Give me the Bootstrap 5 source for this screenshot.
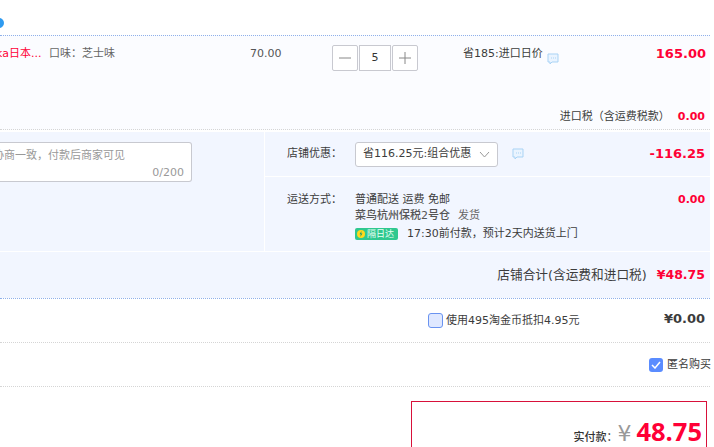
<!DOCTYPE html>
<html lang="zh-CN">
<head>
    <meta charset="UTF-8">
    <meta name="viewport" content="width=device-width, initial-scale=1">
    <title>确认订单</title>
    <link href="https://cdn.jsdelivr.net/npm/bootstrap@5.3.0/dist/css/bootstrap.min.css" rel="stylesheet">
    <script src="https://cdn.jsdelivr.net/npm/bootstrap@5.3.0/dist/js/bootstrap.bundle.min.js"></script>
    <style>
        html, body { height: 447px; overflow: hidden; background: #fff; }
        body { font-family: "DejaVu Sans", "Noto Sans CJK SC", sans-serif; font-size: 11px; color: #3c3c3c; line-height: 16px; }
        .order-wrap { width: 710px; }
        .top-strip { height: 35px; padding-top: 18px; }
        .shop-dot { width: 10px; height: 10px; margin-left: -6px; border-radius: 50%; background: #2f9bf0; }
        .item-row { height: 95px; background: #fbfcff; border-top: 1px dotted #8fb0ea; border-bottom: 1px dotted #d5d5d5; }
        .item-title { width: 53px; flex-shrink: 0; margin-left: -4px; padding-top: 10px; color: #ff0036; white-space: nowrap; }
        .item-sku { width: 201px; flex-shrink: 0; padding-top: 10px; color: #666; }
        .item-price { width: 82px; flex-shrink: 0; padding-top: 10px; color: #555; }
        .qty-btn { width: 26px; height: 26px; border: 1px solid #c8c9d0; border-radius: 2px; background: #fff; }
        .qty-input { width: 32px; height: 26px; border: 1px solid #c8c9d0; background: #fff; color: #333; font-size: 11px; line-height: 24px; text-align: center; }
        .qty-box { gap: 1px; padding-top: 9px; width: 131px; flex-shrink: 0; }
        .promo-text { padding-top: 10px; color: #3c3c3c; }
        .bubble { width: 12px; height: 12px; flex-shrink: 0; }
        .bubble-item { margin-top: 7px; }
        .amount { color: #ff0036; font-weight: 700; font-size: 13px; }
        .amount-sm { font-size: 11px; }
        .item-main { height: 73px; }
        .tax-row { padding-right: 5px; gap: 8px; }
        .band { background: #f2f6ff; }
        .memo-band { margin-top: 2px; }
        .memo-col { width: 264px; flex-shrink: 0; border-right: 1px solid #fff; box-sizing: content-box; padding-top: 10px; }
        .memo-box { width: 192px; height: 40px; background: #fff; border: 1px solid #c8c9d0; border-left: 0; border-radius: 0 3px 3px 0; color: #999; padding: 5px 7px 0 0; }
        .memo-hint { margin-left: -7px; white-space: nowrap; }
        .memo-count { color: #999; text-align: right; padding-top: 1px; }
        .opt-row { height: 45px; border-bottom: 1px solid #fff; padding: 0 5px 0 22px; }
        .opt-label { width: 68px; flex-shrink: 0; }
        .opt-select { width: 143px; height: 25px; background: #fff; border: 1px solid #c8c9d0; border-radius: 3px; padding: 0 7px; color: #3c3c3c; margin-right: 14px; }
        .ship-row { height: 74px; padding: 15px 5px 0 22px; }
        .ship-lines { width: 323px; }
        .ship-line { height: 16px; line-height: 16px; white-space: nowrap; }
        .ship-line-fast { margin-top: 2px; }
        .ship-wh { font-weight: 500; color: #555; }
        .ship-muted { color: #666; }
        .fast-tag { width: 43px; height: 12px; background: #2fc88f; border-radius: 2px; color: #e8fff5; font-size: 9px; line-height: 12px; gap: 2px; padding-left: 2px; margin-right: 9px; }
        .fast-icon { width: 8px; height: 8px; border-radius: 50%; background: #ffd91c; }
        .total-row { height: 47px; border-top: 1px solid #fff; padding-right: 5px; gap: 10px; font-size: 12.7px; }
        .total-row .amount { font-size: 12.5px; }
        .coin-row { height: 45px; border-top: 1px dotted #8fb0ea; border-bottom: 1px dotted #d5d5d5; padding: 14px 5px 0 428px; }
        .coin-check { width: 15px; height: 15px; background: #dfe8ff; border: 1px solid #6a93f0; border-radius: 3px; margin-right: 3px; }
        .coin-total { font-size: 13px; font-weight: 700; color: #3c3c3c; margin-top: -2px; }
        .anon-row { height: 44px; border-bottom: 1px dotted #d5d5d5; }
        .anon-check { width: 14px; height: 14px; background: #5a8cff; border-radius: 3px; margin-right: 4px; }
        .anon-text { margin-right: -1px; }
        .pay-box { width: 296px; height: 46px; margin: 14px 0 0 411px; border: 1px solid #d8113a; border-bottom: 0; padding: 17px 4px 0 0; background: #fff; }
        .pay-label { font-weight: 500; color: #333; }
        .pay-yen { font-size: 22px; color: #999; line-height: 24px; margin-right: 5px; }
        .pay-num { font-size: 25.5px; font-weight: 700; color: #ff0036; line-height: 24px; font-family: "Open Sans", "DejaVu Sans", sans-serif; }
    </style>
</head>
<body>
    <div class="order-wrap">
        <div class="top-strip"><div class="shop-dot"></div></div>

        <!-- item -->
        <div class="item-row">
            <div class="item-main d-flex">
                <div class="item-title">ka日本...</div>
                <div class="item-sku">口味：芝士味</div>
                <div class="item-price">70.00</div>
                <div class="qty-box d-flex align-items-start">
                    <div class="qty-btn d-flex align-items-center justify-content-center">
                        <svg width="12" height="12" viewBox="0 0 12 12"><path d="M0 6h12" stroke="#888" stroke-width="1"/></svg>
                    </div>
                    <div class="qty-input">5</div>
                    <div class="qty-btn d-flex align-items-center justify-content-center">
                        <svg width="12" height="12" viewBox="0 0 12 12"><path d="M0 6h12M6 0v12" stroke="#888" stroke-width="1"/></svg>
                    </div>
                </div>
                <div class="promo-text d-flex flex-grow-1">
                    <span>省185:进口日价</span>
                    <svg class="bubble bubble-item ms-1" viewBox="0 0 12 12"><path d="M1 1h10v8H5L3 11V9H1z" fill="#eaf4ff" stroke="#a9d3f5"/><path d="M4 5h1M6 5h1M8 5h1" stroke="#a9d3f5"/></svg>
                    <span class="amount ms-auto pe-1">165.00</span>
                </div>
            </div>
            <div class="tax-row d-flex justify-content-end">
                <span>进口税（含运费税款）</span>
                <span class="amount amount-sm">0.00</span>
            </div>
        </div>

        <!-- memo and shop options -->
        <div class="band d-flex memo-band">
            <div class="memo-col">
                <div class="memo-box">
                    <div class="memo-hint">协商一致，付款后商家可见</div>
                    <div class="memo-count">0/200</div>
                </div>
            </div>
            <div class="flex-grow-1">
                <div class="opt-row d-flex align-items-center">
                    <span class="opt-label">店铺优惠：</span>
                    <div class="opt-select d-flex align-items-center justify-content-between">
                        <span>省116.25元:组合优惠</span>
                        <svg width="11" height="7" viewBox="0 0 11 7"><path d="M1 1l4.500 5L10 1" fill="none" stroke="#999"/></svg>
                    </div>
                    <svg class="bubble" viewBox="0 0 12 12"><path d="M1 1h10v8H5L3 11V9H1z" fill="#eaf4ff" stroke="#a9d3f5"/><path d="M4 5h1M6 5h1M8 5h1" stroke="#a9d3f5"/></svg>
                    <span class="amount ms-auto">-116.25</span>
                </div>
                <div class="ship-row d-flex">
                    <span class="opt-label">运送方式：</span>
                    <div class="ship-lines">
                        <div class="ship-line">普通配送 运费 免邮</div>
                        <div class="ship-line"><span class="ship-wh">菜鸟杭州保税2号仓</span><span class="ship-muted ms-2">发货</span></div>
                        <div class="ship-line ship-line-fast d-flex align-items-center">
                            <span class="fast-tag d-inline-flex align-items-center">
                                <svg class="fast-icon" viewBox="0 0 8 8"><path d="M4.500 1L2.500 4.300h1.300L3.300 7l2.200-3.400H4.200z" fill="#1f9a6c"/></svg>
                                隔日达
                            </span>
                            <span>17:30前付款，预计2天内送货上门</span>
                        </div>
                    </div>
                    <span class="amount amount-sm ms-auto">0.00</span>
                </div>
            </div>
        </div>
        <div class="band total-row d-flex align-items-center justify-content-end">
            <span>店铺合计(含运费和进口税)</span>
            <span class="amount">¥48.75</span>
        </div>

        <!-- coins -->
        <div class="coin-row d-flex align-items-start">
            <span class="coin-check"></span>
            <span>使用495淘金币抵扣4.95元</span>
            <span class="coin-total ms-auto">¥0.00</span>
        </div>

        <!-- anonymous -->
        <div class="anon-row d-flex align-items-center justify-content-end">
            <span class="anon-check d-flex align-items-center justify-content-center">
                <svg width="10" height="8" viewBox="0 0 10 8"><path d="M1 4l3 3 5-6" fill="none" stroke="#fff" stroke-width="1.500"/></svg>
            </span>
            <span class="anon-text">匿名购买</span>
        </div>

        <!-- pay total -->
        <div class="pay-box d-flex justify-content-end align-items-baseline">
            <span class="pay-label">实付款：</span>
            <span class="pay-yen">¥</span>
            <span class="pay-num">48.75</span>
        </div>
    </div>
</body>
</html>
